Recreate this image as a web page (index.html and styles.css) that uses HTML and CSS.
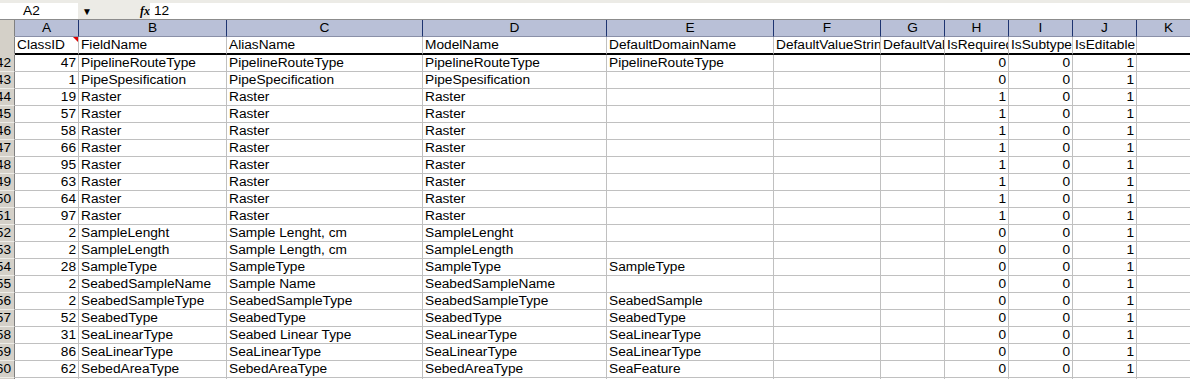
FILE: index.html
```html
<!DOCTYPE html>
<html lang="en">
<head>
<meta charset="UTF-8">
<title>Book1 - Fields</title>
<link rel="stylesheet" href="styles.css">
</head>
<body>

<div class="formula-bar">
    <div class="name-box">A2</div>
    <div class="name-drop">&#9660;</div>
    <div class="fx">fx</div>
    <div class="formula">12</div>
</div>

<div class="sheet">
    <div class="row col-heads">
        <div></div><div>A</div><div>B</div><div>C</div><div>D</div><div>E</div><div>F</div><div>G</div><div>H</div><div>I</div><div>J</div><div>K</div>
    </div>
    <div class="row title-row">
        <div class="rh"></div>
        <div class="has-note">ClassID<span class="note"></span></div>
        <div>FieldName</div><div>AliasName</div><div>ModelName</div><div>DefaultDomainName</div>
        <div>DefaultValueString</div><div>DefaultValue</div><div>IsRequired</div><div>IsSubtype</div><div>IsEditable</div><div></div>
    </div>

    <div class="row"><div class="rh"><span>42</span></div><div class="n">47</div><div>PipelineRouteType</div><div>PipelineRouteType</div><div>PipelineRouteType</div><div>PipelineRouteType</div><div></div><div></div><div class="n">0</div><div class="n">0</div><div class="n">1</div><div></div></div>
    <div class="row"><div class="rh"><span>43</span></div><div class="n">1</div><div>PipeSpesification</div><div>PipeSpecification</div><div>PipeSpesification</div><div></div><div></div><div></div><div class="n">0</div><div class="n">0</div><div class="n">1</div><div></div></div>
    <div class="row"><div class="rh"><span>44</span></div><div class="n">19</div><div>Raster</div><div>Raster</div><div>Raster</div><div></div><div></div><div></div><div class="n">1</div><div class="n">0</div><div class="n">1</div><div></div></div>
    <div class="row"><div class="rh"><span>45</span></div><div class="n">57</div><div>Raster</div><div>Raster</div><div>Raster</div><div></div><div></div><div></div><div class="n">1</div><div class="n">0</div><div class="n">1</div><div></div></div>
    <div class="row"><div class="rh"><span>46</span></div><div class="n">58</div><div>Raster</div><div>Raster</div><div>Raster</div><div></div><div></div><div></div><div class="n">1</div><div class="n">0</div><div class="n">1</div><div></div></div>
    <div class="row"><div class="rh"><span>47</span></div><div class="n">66</div><div>Raster</div><div>Raster</div><div>Raster</div><div></div><div></div><div></div><div class="n">1</div><div class="n">0</div><div class="n">1</div><div></div></div>
    <div class="row"><div class="rh"><span>48</span></div><div class="n">95</div><div>Raster</div><div>Raster</div><div>Raster</div><div></div><div></div><div></div><div class="n">1</div><div class="n">0</div><div class="n">1</div><div></div></div>
    <div class="row"><div class="rh"><span>49</span></div><div class="n">63</div><div>Raster</div><div>Raster</div><div>Raster</div><div></div><div></div><div></div><div class="n">1</div><div class="n">0</div><div class="n">1</div><div></div></div>
    <div class="row"><div class="rh"><span>50</span></div><div class="n">64</div><div>Raster</div><div>Raster</div><div>Raster</div><div></div><div></div><div></div><div class="n">1</div><div class="n">0</div><div class="n">1</div><div></div></div>
    <div class="row"><div class="rh"><span>51</span></div><div class="n">97</div><div>Raster</div><div>Raster</div><div>Raster</div><div></div><div></div><div></div><div class="n">1</div><div class="n">0</div><div class="n">1</div><div></div></div>
    <div class="row"><div class="rh"><span>52</span></div><div class="n">2</div><div>SampleLenght</div><div>Sample Lenght, cm</div><div>SampleLenght</div><div></div><div></div><div></div><div class="n">0</div><div class="n">0</div><div class="n">1</div><div></div></div>
    <div class="row"><div class="rh"><span>53</span></div><div class="n">2</div><div>SampleLength</div><div>Sample Length, cm</div><div>SampleLength</div><div></div><div></div><div></div><div class="n">0</div><div class="n">0</div><div class="n">1</div><div></div></div>
    <div class="row"><div class="rh"><span>54</span></div><div class="n">28</div><div>SampleType</div><div>SampleType</div><div>SampleType</div><div>SampleType</div><div></div><div></div><div class="n">0</div><div class="n">0</div><div class="n">1</div><div></div></div>
    <div class="row"><div class="rh"><span>55</span></div><div class="n">2</div><div>SeabedSampleName</div><div>Sample Name</div><div>SeabedSampleName</div><div></div><div></div><div></div><div class="n">0</div><div class="n">0</div><div class="n">1</div><div></div></div>
    <div class="row"><div class="rh"><span>56</span></div><div class="n">2</div><div>SeabedSampleType</div><div>SeabedSampleType</div><div>SeabedSampleType</div><div>SeabedSample</div><div></div><div></div><div class="n">0</div><div class="n">0</div><div class="n">1</div><div></div></div>
    <div class="row"><div class="rh"><span>57</span></div><div class="n">52</div><div>SeabedType</div><div>SeabedType</div><div>SeabedType</div><div>SeabedType</div><div></div><div></div><div class="n">0</div><div class="n">0</div><div class="n">1</div><div></div></div>
    <div class="row"><div class="rh"><span>58</span></div><div class="n">31</div><div>SeaLinearType</div><div>Seabed Linear Type</div><div>SeaLinearType</div><div>SeaLinearType</div><div></div><div></div><div class="n">0</div><div class="n">0</div><div class="n">1</div><div></div></div>
    <div class="row"><div class="rh"><span>59</span></div><div class="n">86</div><div>SeaLinearType</div><div>SeaLinearType</div><div>SeaLinearType</div><div>SeaLinearType</div><div></div><div></div><div class="n">0</div><div class="n">0</div><div class="n">1</div><div></div></div>
    <div class="row"><div class="rh"><span>60</span></div><div class="n">62</div><div>SebedAreaType</div><div>SebedAreaType</div><div>SebedAreaType</div><div>SeaFeature</div><div></div><div></div><div class="n">0</div><div class="n">0</div><div class="n">1</div><div></div></div>
    <div class="row"><div class="rh"><span>61</span></div><div></div><div></div><div></div><div></div><div></div><div></div><div></div><div></div><div></div><div></div><div></div></div>
</div>

</body>
</html>
```

FILE: styles.css
```css
body {
    margin: 0;
    padding: 0;
    height: 379px;
    overflow: hidden;
    background-color: #fff;
    font-family: 'Liberation Sans', Arial, sans-serif;
    font-size: 13.7px;
    color: #000;
}

/* formula bar */
.formula-bar {
    display: flex;
    height: 20px;
    padding-top: 3px;
    box-sizing: border-box;
    background-color: #ecebe6;
    border-bottom: 1px solid #8c8c8c;
}
.name-box {
    width: 78px;
    padding-left: 23px;
    box-sizing: border-box;
    background-color: #fff;
    line-height: 16px;
}
.name-drop {
    width: 18px;
    font-size: 10px;
    line-height: 17px;
    text-align: center;
}
.fx {
    margin-left: 44px;
    width: 10px;
    font-family: 'Liberation Serif', serif;
    font-style: italic;
    font-weight: bold;
    font-size: 12px;
    line-height: 16px;
}
.formula {
    flex: 1;
    padding-left: 4px;
    background-color: #fff;
    line-height: 16px;
}

/* grid */
.row {
    display: flex;
    height: 17px;
}
.row > div {
    flex: none;
    box-sizing: border-box;
    height: 100%;
    padding: 0 2px;
    border-right: 1px solid #c0c0c0;
    border-bottom: 1px solid #c0c0c0;
    line-height: 16px;
    white-space: nowrap;
    overflow: hidden;
}
.row > :nth-child(1) { width: 15px; }
.row > :nth-child(2) { width: 64px; }
.row > :nth-child(3) { width: 148px; }
.row > :nth-child(4) { width: 196px; }
.row > :nth-child(5) { width: 184px; }
.row > :nth-child(6) { width: 167px; }
.row > :nth-child(7) { width: 107px; }
.row > :nth-child(8),
.row > :nth-child(9),
.row > :nth-child(10),
.row > :nth-child(11),
.row > :nth-child(12) { width: 64px; }

.row > .n {
    text-align: right;
}

.row > .rh {
    display: flex;
    justify-content: flex-end;
    padding: 0 3px 0 0;
    background-color: #d4d0c8;
    border-right-color: #808080;
    border-bottom-color: #eeede8;
}

.col-heads > div {
    background-color: #b9c0d7;
    border-right-color: #1e3470;
    border-bottom-color: #8a90a8;
    text-align: center;
}
.col-heads > :first-child {
    background-color: #d4d0c8;
    border-right-color: #808080;
    border-bottom-color: #d4d0c8;
}

.title-row {
    height: 18px;
}
.title-row > div {
    height: 18px;
    border-bottom: 2px solid #000;
}
.title-row > .rh {
    border-bottom-color: #d4d0c8;
}

.has-note {
    position: relative;
}
.note {
    position: absolute;
    top: 0;
    right: 0;
    width: 0;
    height: 0;
    border-top: 5px solid #e00000;
    border-left: 5px solid transparent;
}
```
